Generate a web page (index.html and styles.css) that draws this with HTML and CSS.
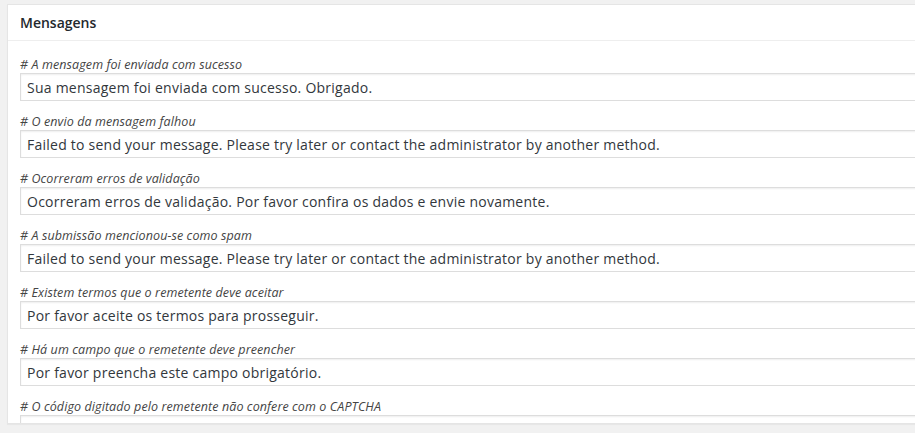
FILE: index.html
```html
<!DOCTYPE html>
<html lang="pt">
<head>
    <meta charset="UTF-8">
    <title>Mensagens</title>
    <link rel="stylesheet" href="styles.css">
</head>
<body>
    <div class="postbox">
        <h3 class="hndle">Mensagens</h3>
        <div class="inside">
            <div class="message-row">
                <label class="message-label"># A mensagem foi enviada com sucesso</label>
                <input class="message-input" type="text" value="Sua mensagem foi enviada com sucesso. Obrigado.">
            </div>
            <div class="message-row">
                <label class="message-label"># O envio da mensagem falhou</label>
                <input class="message-input" type="text" value="Failed to send your message. Please try later or contact the administrator by another method.">
            </div>
            <div class="message-row">
                <label class="message-label"># Ocorreram erros de validação</label>
                <input class="message-input" type="text" value="Ocorreram erros de validação. Por favor confira os dados e envie novamente.">
            </div>
            <div class="message-row">
                <label class="message-label"># A submissão mencionou-se como spam</label>
                <input class="message-input" type="text" value="Failed to send your message. Please try later or contact the administrator by another method.">
            </div>
            <div class="message-row">
                <label class="message-label"># Existem termos que o remetente deve aceitar</label>
                <input class="message-input" type="text" value="Por favor aceite os termos para prosseguir.">
            </div>
            <div class="message-row">
                <label class="message-label"># Há um campo que o remetente deve preencher</label>
                <input class="message-input" type="text" value="Por favor preencha este campo obrigatório.">
            </div>
            <div class="message-row">
                <label class="message-label"># O código digitado pelo remetente não confere com o CAPTCHA</label>
                <input class="message-input" type="text" value="">
            </div>
        </div>
    </div>
</body>
</html>
```

FILE: styles.css
```css
html {
    background: #f1f1f1;
    overflow: hidden;
}
body {
    margin: 0;
    padding: 4px 0 0 7px;
    font-family: 'Open Sans', sans-serif;
    font-size: 13px;
    color: #444;
    height: 429px;
    overflow: hidden;
}
.postbox {
    width: 1100px;
    height: 420px;
    background: #fff;
    border: 1px solid #e5e5e5;
    box-shadow: 0 1px 1px rgba(0, 0, 0, 0.04);
    overflow: hidden;
    box-sizing: border-box;
}
.hndle {
    margin: 0;
    padding: 8px 12px;
    font-size: 14px;
    font-weight: 600;
    line-height: 19px;
    color: #23282d;
    border-bottom: 1px solid #eee;
}
.inside {
    padding: 15px 12px 0;
    display: flex;
    flex-direction: column;
    gap: 12px;
}
.message-row {
    display: flex;
    flex-direction: column;
}
.message-label {
    font-size: 12.5px;
    font-style: italic;
    letter-spacing: 0.1px;
    line-height: 17px;
    color: #444;
}
.message-input {
    width: 1000px;
    height: 28px;
    box-sizing: border-box;
    margin: 0;
    padding: 2px 6px;
    border: 1px solid #ddd;
    box-shadow: inset 0 1px 2px rgba(0, 0, 0, 0.07);
    background: #fff;
    font-family: 'Open Sans', sans-serif;
    font-size: 14px;
    letter-spacing: 0.24px;
    color: #32373c;
    outline: none;
}
```
